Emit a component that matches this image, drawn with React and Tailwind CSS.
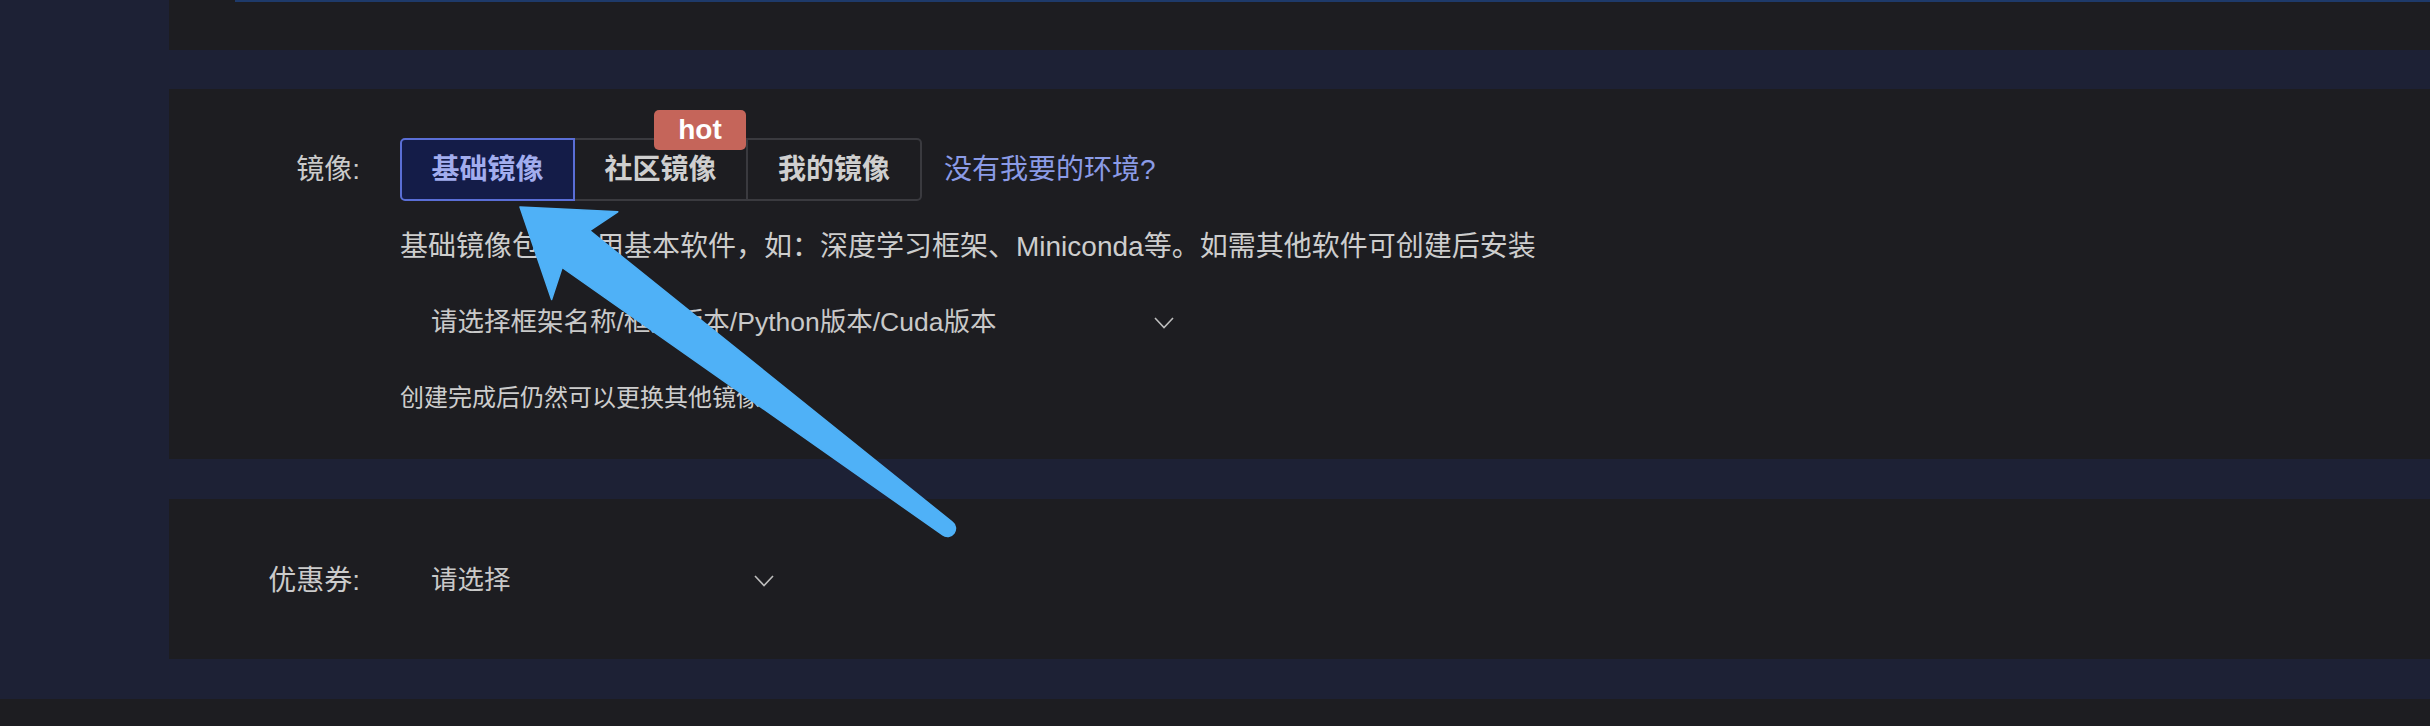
import React from "react";

const FONT = { fontFamily: '"Liberation Sans", "Noto Sans CJK SC", sans-serif' };

function Chevron() {
  return (
    <svg width="20" height="12" viewBox="0 0 20 12" fill="none">
      <polyline points="1,1 10,10.5 19,1" stroke="#bdbdbd" strokeWidth="1.6" />
    </svg>
  );
}

export default function App() {
  return (
    <div
      className="relative w-[2430px] h-[726px] overflow-hidden bg-[#1d2135] text-[#cdcdcd]"
      style={FONT}
    >
      <div className="pl-[169px]">
        {/* top panel */}
        <div className="h-[50px] bg-[#1d1d21] pl-[66px]">
          <div className="h-[2px] bg-[#1e3a6a]" />
        </div>

        {/* image panel */}
        <section className="mt-[39px] h-[370px] bg-[#1d1d21] flex pt-[49px]">
          <div className="w-[231px] pr-[40px] text-right h-[63px] leading-[63px] text-[28px] text-[#cbcbcb]">
            镜像:
          </div>
          <div className="flex flex-col">
            <div className="flex items-center h-[63px]">
              <div className="flex">
                <button className="w-[175px] h-[63px] flex items-center justify-center border-2 border-[#5a6ed6] bg-[#141c48] text-[#a2adee] rounded-l-[5px] font-bold text-[28px]">
                  基础镜像
                </button>
                <button className="relative w-[173px] h-[63px] flex items-center justify-center border-2 border-l-0 border-[#3a3a3f] text-[#cfcfcf] font-bold text-[28px]">
                  社区镜像
                  <span className="absolute -top-[30px] right-[0px] w-[92px] h-[40px] bg-[#c5655a] rounded-[5px] text-white text-[28px] font-semibold flex items-center justify-center leading-none">
                    hot
                  </span>
                </button>
                <button className="w-[174px] h-[63px] flex items-center justify-center border-2 border-l-0 border-[#3a3a3f] text-[#cfcfcf] font-bold text-[28px] rounded-r-[5px]">
                  我的镜像
                </button>
              </div>
              <a className="ml-[22px] text-[28px] text-[#8b9be6]">没有我要的环境?</a>
            </div>
            <p className="mt-[26px] leading-[40px] text-[28px] text-[#cdcdcd] whitespace-nowrap">
              基础镜像包含常用基本软件，如：深度学习框架、Miniconda等。如需其他软件可创建后安装
            </p>
            <div className="mt-[28px] h-[56px] w-[790px] flex items-center justify-between pl-[31px] pr-[16px]">
              <span className="text-[26.5px] text-[#c9c9c9] whitespace-nowrap">
                请选择框架名称/框架版本/Python版本/Cuda版本
              </span>
              <Chevron />
            </div>
            <p className="mt-[31px] text-[24px] leading-[32px] text-[#cdcdcd]">
              创建完成后仍然可以更换其他镜像
            </p>
          </div>
        </section>

        {/* coupon panel */}
        <section className="mt-[40px] h-[160px] bg-[#1d1d21] flex items-center pt-[4px]">
          <div className="w-[231px] pr-[40px] text-right text-[28px] text-[#cbcbcb]">优惠券:</div>
          <div className="w-[390px] h-[56px] flex items-center justify-between pl-[31px] pr-[16px]">
            <span className="text-[26.5px] text-[#c9c9c9]">请选择</span>
            <Chevron />
          </div>
        </section>

        <div className="h-[40px]" />
      </div>
      <div className="h-[27px] bg-[#1d1d21]" />

      {/* annotation arrow overlay */}
      <svg
        className="absolute left-0 top-0 pointer-events-none"
        width="2430"
        height="726"
        viewBox="0 0 2430 726"
      >
        <path
          d="M520,207 L617.8,211.8 L589.7,230.7 L952.3,522.1 A8,8 0 0 1 942.7,534.9 L562.1,267.5 L551.6,299.6 Z"
          fill="#4fb1f7"
          stroke="#4fb1f7"
          strokeWidth="1.5"
          strokeLinejoin="round"
        />
      </svg>
    </div>
  );
}
